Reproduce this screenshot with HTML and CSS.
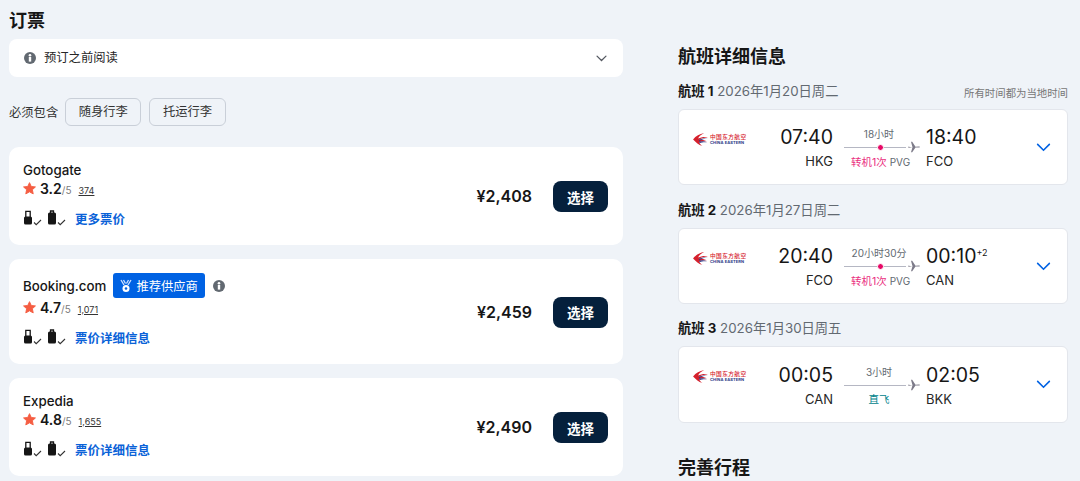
FILE: index.html
```html
<!DOCTYPE html>
<html lang="zh">
<head>
  <meta charset="UTF-8">
  <title>订票</title>
  <link rel="stylesheet" href="styles.css">
</head>
<body>
  <svg class="sprite" width="0" height="0">
    <symbol id="info" viewBox="0 0 12 12"><circle cx="6" cy="6" r="6" fill="#626971"/><rect x="4.800" y="5" width="2.400" height="4.600" fill="#fff"/><circle cx="6" cy="3.200" r="1.300" fill="#fff"/></symbol>
    <symbol id="star" viewBox="0 0 14 14"><path d="M7 .7l1.900 4.100 4.500.5-3.300 3 .9 4.500L7 10.600l-4 2.200.9-4.500-3.300-3 4.500-.5z" fill="#f55d42" stroke="#f55d42" stroke-linejoin="round"/></symbol>
    <symbol id="cabin" viewBox="0 0 20 16"><path d="M2.800 7V1.300h4.400V7" fill="none" stroke="#161616" stroke-width="1.300"/><rect x="1" y="6.500" width="8" height="8" rx="1.600" fill="#161616"/><path d="M11 12.500l2.200 2.200 4.800-4.700" fill="none" stroke="#333" stroke-width="1.100"/></symbol>
    <symbol id="bag" viewBox="0 0 20 16"><path d="M3.500 3V1h3v2" fill="none" stroke="#161616" stroke-width="1.300"/><rect x="1" y="2.500" width="8" height="12" rx="1.600" fill="#161616"/><path d="M11 12.500l2.200 2.200 4.800-4.700" fill="none" stroke="#333" stroke-width="1.100"/></symbol>
    <symbol id="chev" viewBox="0 0 16 10"><path d="M1.500 1.500L8 8l6.500-6.500" fill="none" stroke="currentColor" stroke-width="1.800" stroke-linecap="round"/></symbol>
    <symbol id="plane" viewBox="0 0 12 12"><path d="M0 6l1-.6 1.200 1 2.300-.2L3 .8h1.200l3.300 4.900 3-.2c1 0 1.500.2 1.500.5s-.5.5-1.500.5l-3-.1L4.200 11.200H3l1.500-5-2.300-.1L1 7z" fill="#7d7b89"/></symbol>
    <symbol id="swallow" viewBox="0 0 16 14"><path d="M0 7C3 3 7 1 12 0 8 2 6 4 5.500 6 8 4.500 12 4 16 4.500 11 5 8 6 6.500 7.500 9 7 12 7.500 15 9 11 8.500 8 9 6.500 10 7 11.500 8.500 13 10 14 6 13 3 10 0 7z" fill="#d5202c"/><path d="M6 7.500C9 6 12 5.800 16 6 12 6.500 9 7 7 8.500z M6.500 9.500C9 8.500 12 8.800 15 10 12 9.800 9 10 7 11z" fill="#2c3a86"/></symbol>
  </svg>

  <div class="page">
    <div class="left">
      <h2 class="title">订票</h2>
      <div class="notice">
        <svg class="ico12"><use href="#info"/></svg>
        <span class="notice-text">预订之前阅读</span>
        <svg class="notice-chev"><use href="#chev"/></svg>
      </div>
      <div class="chips">
        <span class="chips-label">必须包含</span>
        <span class="chip">随身行李</span>
        <span class="chip">托运行李</span>
      </div>

      <div class="offer">
        <div class="offer-info">
          <div class="agent"><span>Gotogate</span></div>
          <div class="rating">
            <svg class="star"><use href="#star"/></svg>
            <b>3.2</b><span class="out">/5</span><span class="count">374</span>
          </div>
          <div class="bags">
            <svg class="bag"><use href="#cabin"/></svg>
            <svg class="bag"><use href="#bag"/></svg>
            <a class="more">更多票价</a>
          </div>
        </div>
        <div class="price">¥2,408</div>
        <button class="select">选择</button>
      </div>

      <div class="offer offer-tall">
        <div class="offer-info">
          <div class="agent">
            <span>Booking.com</span>
            <span class="badge">
              <svg class="medal" viewBox="0 0 12 14"><path d="M1 1l3 5M11 1L8 6M3.500 1l2 3.500M8.500 1l-2 3.500" stroke="#cfe2ff" stroke-width="1.300" fill="none"/><circle cx="6" cy="9.500" r="3.500" fill="#fff"/><circle cx="6" cy="9.500" r="1.300" fill="#0062e3"/></svg>
              推荐供应商
            </span>
            <svg class="ico12 badge-info"><use href="#info"/></svg>
          </div>
          <div class="rating">
            <svg class="star"><use href="#star"/></svg>
            <b>4.7</b><span class="out">/5</span><span class="count">1,071</span>
          </div>
          <div class="bags">
            <svg class="bag"><use href="#cabin"/></svg>
            <svg class="bag"><use href="#bag"/></svg>
            <a class="more">票价详细信息</a>
          </div>
        </div>
        <div class="price">¥2,459</div>
        <button class="select">选择</button>
      </div>

      <div class="offer">
        <div class="offer-info">
          <div class="agent"><span>Expedia</span></div>
          <div class="rating">
            <svg class="star"><use href="#star"/></svg>
            <b>4.8</b><span class="out">/5</span><span class="count">1,655</span>
          </div>
          <div class="bags">
            <svg class="bag"><use href="#cabin"/></svg>
            <svg class="bag"><use href="#bag"/></svg>
            <a class="more">票价详细信息</a>
          </div>
        </div>
        <div class="price">¥2,490</div>
        <button class="select">选择</button>
      </div>
    </div>

    <div class="right">
      <h2 class="title title-right">航班详细信息</h2>

      <div class="leg-head">
        <span class="leg-date"><b>航班 1</b> 2026年1月20日周二</span>
        <span class="leg-note">所有时间都为当地时间</span>
      </div>
      <div class="leg">
        <div class="logo">
          <svg class="swallow"><use href="#swallow"/></svg>
          <div class="logo-text"><span class="logo-cn">中国东方航空</span><span class="logo-en">CHINA EASTERN</span></div>
        </div>
        <div class="end end-from"><div class="time">07:40</div><div class="code">HKG</div></div>
        <div class="route">
          <div class="dur">18小时</div>
          <div class="line"><i class="dot"></i><svg class="plane"><use href="#plane"/></svg></div>
          <div class="stops"><span class="pink">转机1次</span> <span class="via">PVG</span></div>
        </div>
        <div class="end"><div class="time">18:40</div><div class="code">FCO</div></div>
        <svg class="leg-chev"><use href="#chev"/></svg>
      </div>

      <div class="leg-head">
        <span class="leg-date"><b>航班 2</b> 2026年1月27日周二</span>
      </div>
      <div class="leg">
        <div class="logo">
          <svg class="swallow"><use href="#swallow"/></svg>
          <div class="logo-text"><span class="logo-cn">中国东方航空</span><span class="logo-en">CHINA EASTERN</span></div>
        </div>
        <div class="end end-from"><div class="time">20:40</div><div class="code">FCO</div></div>
        <div class="route">
          <div class="dur">20小时30分</div>
          <div class="line"><i class="dot"></i><svg class="plane"><use href="#plane"/></svg></div>
          <div class="stops"><span class="pink">转机1次</span> <span class="via">PVG</span></div>
        </div>
        <div class="end"><div class="time">00:10<sup class="plus">+2</sup></div><div class="code">CAN</div></div>
        <svg class="leg-chev"><use href="#chev"/></svg>
      </div>

      <div class="leg-head leg-head-last">
        <span class="leg-date"><b>航班 3</b> 2026年1月30日周五</span>
      </div>
      <div class="leg leg-last">
        <div class="logo">
          <svg class="swallow"><use href="#swallow"/></svg>
          <div class="logo-text"><span class="logo-cn">中国东方航空</span><span class="logo-en">CHINA EASTERN</span></div>
        </div>
        <div class="end end-from"><div class="time">00:05</div><div class="code">CAN</div></div>
        <div class="route">
          <div class="dur">3小时</div>
          <div class="line"><svg class="plane"><use href="#plane"/></svg></div>
          <div class="stops"><span class="green">直飞</span></div>
        </div>
        <div class="end"><div class="time">02:05</div><div class="code">BKK</div></div>
        <svg class="leg-chev"><use href="#chev"/></svg>
      </div>

      <h2 class="title title-bottom">完善行程</h2>
    </div>
  </div>
</body>
</html>
```

FILE: styles.css
```css
html, body {
  height: 481px;
  overflow: hidden;
}
body {
  margin: 0;
  background-color: #eff3f8;
  color: #161616;
  font-family: Inter, "Noto Sans CJK SC", sans-serif;
  font-size: 12.300px;
}
.sprite {
  display: none;
}
h2 {
  margin: 0;
}
.page {
  display: flex;
  justify-content: space-between;
  padding: 0 12px 0 9px;
}
.left {
  width: 614px;
}
.right {
  width: 390px;
}
.title {
  font-size: 18px;
  font-weight: 700;
  line-height: 25px;
  margin: 8px 0 6px 0;
}
.ico12 {
  width: 12px;
  height: 12px;
  flex: none;
}

/* notice */
.notice {
  display: flex;
  align-items: center;
  height: 38px;
  padding: 0 16px 0 15px;
  background: #fff;
  border-radius: 8px;
}
.notice-text {
  margin-left: 8px;
  margin-top: -2px;
  color: #262626;
}
.notice-chev {
  width: 11px;
  height: 7px;
  margin-left: auto;
  color: #545860;
}

/* chips */
.chips {
  display: flex;
  align-items: center;
  gap: 8px;
  margin: 21px 0;
  color: #333;
}
.chips-label {
  margin-right: -1px;
}
.chip {
  height: 26px;
  line-height: 25px;
  padding: 0 12.500px;
  border: 1px solid #c9cfd8;
  border-radius: 6px;
  color: #333;
}

/* offers */
.offer {
  display: flex;
  align-items: center;
  height: 98px;
  padding: 0 15px 0 14px;
  margin-bottom: 14px;
  background: #fff;
  border-radius: 10px;
}
.offer-tall {
  height: 105px;
}
.offer-info {
  flex: 1;
  padding-bottom: 5px;
}
.agent {
  display: flex;
  align-items: center;
  height: 21px;
  font-size: 13.300px;
  font-weight: 500;
}
.offer-tall .agent {
  height: 28px;
}
.badge {
  display: flex;
  align-items: center;
  gap: 4px;
  height: 25px;
  margin-left: 7px;
  padding: 0 7px;
  background: #0062e3;
  border-radius: 3px;
  color: #fff;
  font-size: 12.300px;
  font-weight: 400;
}
.medal {
  width: 12px;
  height: 14px;
}
.badge-info {
  margin-left: 8px;
}
.rating {
  display: flex;
  align-items: baseline;
  height: 20px;
  margin-top: -2px;
  line-height: 20px;
}
.star {
  width: 13px;
  height: 13px;
  align-self: center;
  margin-right: 4px;
}
.rating b {
  font-size: 14px;
  font-weight: 600;
}
.out {
  color: #7c7c7c;
  font-size: 10px;
}
.count {
  margin-left: 7px;
  font-size: 9px;
  color: #333;
  text-decoration: underline;
}
.bags {
  display: flex;
  align-items: center;
  gap: 4px;
  margin-top: 10px;
}
.bag {
  width: 20px;
  height: 16px;
}
.more {
  margin-left: 4px;
  color: #0a62d8;
  font-size: 12.500px;
  font-weight: 700;
}
.price {
  margin-right: 21px;
  font-size: 16px;
  font-weight: 600;
}
.select {
  width: 55px;
  height: 31px;
  margin-top: 1px;
  border: none;
  border-radius: 8px;
  background: #05203c;
  color: #fff;
  font-family: inherit;
  font-size: 13.500px;
  font-weight: 700;
}

/* flights */
.title-right {
  margin: 44px 0 11px 0;
}
.leg-head {
  display: flex;
  justify-content: space-between;
  align-items: flex-end;
  height: 20px;
  margin-bottom: 9px;
  color: #626971;
  font-size: 13.300px;
}
.leg-head-last {
  margin-top: -1px;
}
.leg-date b {
  color: #161616;
  font-weight: 700;
}
.leg-note {
  font-size: 10.400px;
  color: #777;
}
.leg {
  display: flex;
  align-items: center;
  height: 76px;
  padding: 0 16px 0 14px;
  margin-bottom: 14px;
  background: #fff;
  border: 1px solid #e3e6ec;
  border-radius: 6px;
  box-sizing: border-box;
}
.leg-last {
  height: 77px;
}
.logo {
  display: flex;
  align-items: center;
  gap: 2px;
  width: 70px;
  margin-bottom: 16px;
}
.swallow {
  width: 15px;
  height: 13px;
  flex: none;
}
.logo-text {
  display: flex;
  flex-direction: column;
  gap: 1px;
  line-height: 5px;
  white-space: nowrap;
}
.logo-cn {
  color: #d5202c;
  font-size: 5.700px;
  font-weight: 500;
  letter-spacing: .4px;
}
.logo-en {
  color: #2c3a86;
  font-size: 4px;
  font-weight: 700;
  letter-spacing: .1px;
}
.end {
  width: 70px;
}
.end-from {
  text-align: right;
}
.time {
  font-size: 19.500px;
  line-height: 26px;
  white-space: nowrap;
}
.plus {
  font-size: 9px;
  line-height: 0;
  vertical-align: 7px;
}
.code {
  margin-top: 2px;
  font-size: 13px;
  line-height: 18px;
  color: #262626;
}
.route {
  width: 76px;
  margin: 3px 6px 0 11px;
  text-align: center;
}
.dur {
  padding-right: 6px;
  color: #626971;
  font-size: 10px;
  line-height: 14px;
  white-space: nowrap;
}
.line {
  position: relative;
  height: 1px;
  width: 62px;
  margin: 6px 0;
  background: #b5b7c3;
}
.dot {
  position: absolute;
  left: 33px;
  top: -2.500px;
  width: 5px;
  height: 5px;
  border: 1px solid #fff;
  border-radius: 50%;
  background: #e70866;
}
.plane {
  position: absolute;
  left: 64px;
  top: -6px;
  width: 12px;
  height: 12px;
}
.stops {
  font-size: 10.500px;
  line-height: 16px;
  white-space: nowrap;
  text-align: left;
}
.pink {
  margin-left: 7px;
  color: #ea2f80;
}
.green {
  display: block;
  width: 70px;
  text-align: center;
  color: #00838c;
}
.via {
  color: #626971;
  font-size: 10px;
}
.leg-chev {
  width: 15px;
  height: 9px;
  margin-left: auto;
  color: #0062e3;
}
.title-bottom {
  margin: 32px 0 0;
}
```
